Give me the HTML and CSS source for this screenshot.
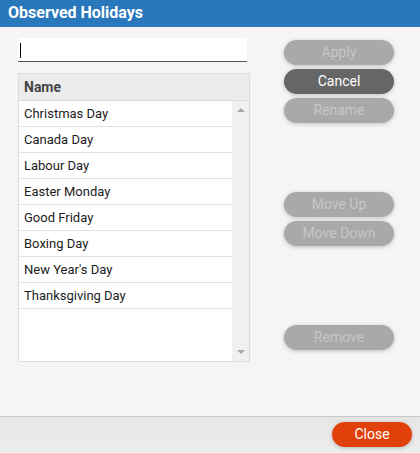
FILE: index.html
```html
<!DOCTYPE html>
<html>
<head>
<meta charset="utf-8">
<link rel="stylesheet" href="styles.css">
</head>
<body>
<div class="titlebar">Observed Holidays</div>
<div class="content">
  <div class="left">
    <div class="input"><span class="caret"></span></div>
    <div class="table">
      <div class="thead">Name</div>
      <div class="tbody">
        <div class="rows">
          <div class="row">Christmas Day</div>
          <div class="row">Canada Day</div>
          <div class="row">Labour Day</div>
          <div class="row">Easter Monday</div>
          <div class="row">Good Friday</div>
          <div class="row">Boxing Day</div>
          <div class="row">New Year's Day</div>
          <div class="row">Thanksgiving Day</div>
        </div>
        <div class="scrollbar">
          <span class="arrow up"></span>
          <span class="arrow down"></span>
        </div>
      </div>
    </div>
  </div>
  <div class="right">
    <div class="btn disabled b-apply">Apply</div>
    <div class="btn dark">Cancel</div>
    <div class="btn disabled">Rename</div>
    <div class="btn disabled b-moveup">Move Up</div>
    <div class="btn disabled">Move Down</div>
    <div class="btn disabled b-remove">Remove</div>
  </div>
</div>
<div class="footer">
  <div class="btn close">Close</div>
</div>
</body>
</html>
```
FILE: styles.css
```css
html, body {
  margin: 0;
  padding: 0;
}
body {
  width: 420px;
  height: 453px;
  background: #f5f5f5;
  font-family: Roboto, "Liberation Sans", sans-serif;
  overflow: hidden;
}
.titlebar {
  height: 27px;
  line-height: 26px;
  background: #2a78bc;
  color: #fff;
  font-size: 16px;
  font-weight: bold;
  padding-left: 8px;
}
.content {
  height: 378px;
  padding: 11px 0 0 18px;
  display: flex;
}
.left {
  width: 232px;
  display: flex;
  flex-direction: column;
}
.input {
  width: 227px;
  height: 23px;
  background: #fff;
  border-bottom: 1px solid #555;
  display: flex;
  align-items: center;
  padding-left: 2px;
  margin-bottom: 11px;
}
.caret {
  width: 1px;
  height: 15px;
  background: #000;
  margin-top: 1px;
}
.table {
  width: 230px;
  border: 1px solid #dcdcdc;
  display: flex;
  flex-direction: column;
}
.thead {
  height: 26px;
  line-height: 26px;
  background: #ececec;
  color: #444;
  font-weight: bold;
  font-size: 14px;
  padding-left: 5px;
  border-bottom: 1px solid #dcdcdc;
}
.tbody {
  height: 260px;
  display: flex;
  background: #fff;
}
.rows {
  width: 213px;
}
.row {
  height: 25px;
  line-height: 25px;
  border-bottom: 1px solid #e2e2e2;
  font-size: 13px;
  color: #1c1c1c;
  padding-left: 5px;
}
.scrollbar {
  width: 17px;
  background: #f0f0f0;
  display: flex;
  flex-direction: column;
  justify-content: space-between;
  align-items: center;
  padding: 7px 0 7px;
}
.arrow {
  width: 0;
  height: 0;
  border-left: 4px solid transparent;
  border-right: 4px solid transparent;
}
.arrow.up {
  border-bottom: 4px solid #a8a8a8;
}
.arrow.down {
  border-top: 4px solid #a8a8a8;
}
.right {
  margin-left: 34px;
  width: 110px;
  display: flex;
  flex-direction: column;
}
.btn {
  height: 25px;
  line-height: 25px;
  border-radius: 13px;
  text-align: center;
  font-size: 14px;
  box-shadow: 0 1px 4px rgba(0, 0, 0, 0.22);
  margin-bottom: 4px;
}
.btn.disabled {
  background: #a9a9a9;
  color: #c6c6c6;
}
.btn.dark {
  background: #666;
  color: #fff;
}
.b-apply {
  margin-top: 2px;
}
.b-moveup {
  margin-top: 65px;
}
.b-remove {
  margin-top: 75px;
}
.footer {
  height: 36px;
  border-top: 1px solid #c8c8c8;
  background: linear-gradient(to bottom, #e6e6e6, #ededed);
  display: flex;
  justify-content: flex-end;
  align-items: flex-start;
  padding: 5px 8px 0 0;
  box-sizing: border-box;
}
.btn.close {
  width: 80px;
  background: #e2400a;
  color: #fff;
  font-size: 14px;
  margin: 0;
}
```
